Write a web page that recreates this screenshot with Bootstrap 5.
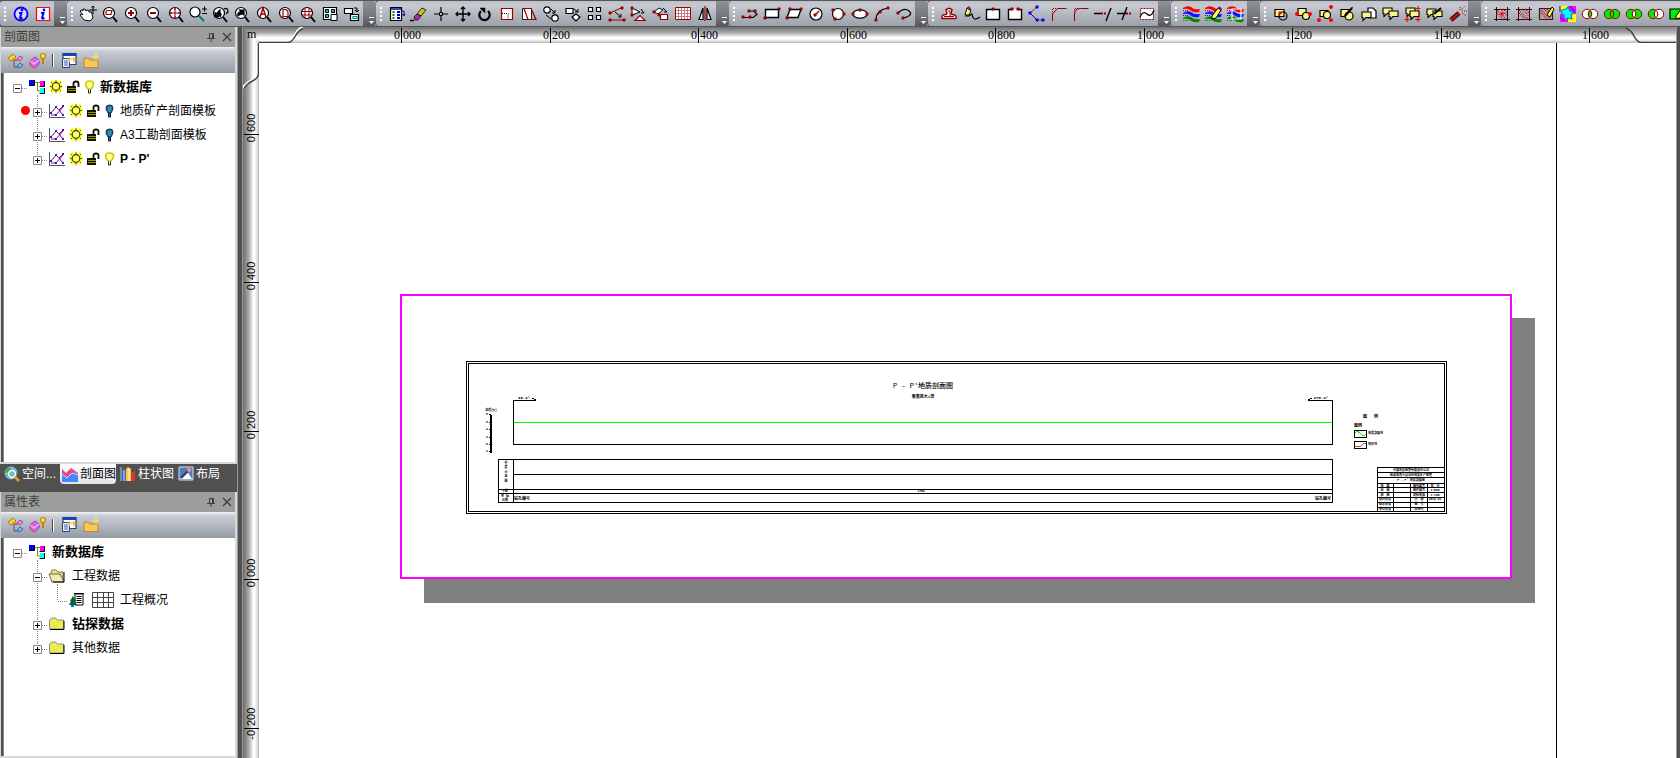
<!DOCTYPE html>
<html lang="zh-CN">
<head>
<meta charset="utf-8">
<meta name="viewport" content="width=device-width, initial-scale=1">
<title>剖面图</title>
<link href="https://cdn.jsdelivr.net/npm/bootstrap@5.3.0/dist/css/bootstrap.min.css" rel="stylesheet">
<style>
body{font:12px/16px "Liberation Sans","Noto Sans CJK SC",sans-serif;background:#505050;color:#000}
.strip{height:27px;background:#55565a;padding-bottom:1px;padding-top:1px}
.tgroup{background:linear-gradient(#bfc2c9,#c6c9d0 20%,#b4b8c0 50%,#9da1a9);border-radius:3px 0 0 3px}
.grip{width:10px;height:16px;margin-top:5px;background:radial-gradient(circle,#fff 0 1px,transparent 1px) 3px 0/4px 4px repeat-y}
.tool{width:22px;height:25px;padding:0;border:0;background:none;display:flex;align-items:center;justify-content:center}
.tool svg{width:20px;height:18px;overflow:visible}
.more{width:13px;padding:0;border:0;background:linear-gradient(#8d9096,#74777c 60%,#55575c);border-radius:0 3px 3px 0;display:flex;align-items:end;justify-content:end}
.side{width:238px;border-right:1px solid #9a9a9a}
.pane{border:solid #d6d8d9;border-width:0 2px 2px 1px}
.pane-one{flex:437 1 0}
.pane-two{flex:266 1 0}
.phead{height:20px;background:#9c9e9b;color:#3c3e3c;padding:0 0 0 3px}
.phead h2{font-size:12px;line-height:16px;font-weight:400}
.hbtn{width:16px;height:16px;padding:0;border:0;background:none;color:#3c3e3c;display:flex;align-items:center;justify-content:center}
.pbar{height:26px;background:linear-gradient(#e2e5ea,#c6cad2 15%,#adb2bb 60%,#949aa3);border-top:1px solid #eee;padding-left:4px}
.pbar .sep{width:1px;height:13px;background:#444;border-right:1px solid #fff;box-sizing:content-box;margin:0 4px 0 3px}
.tree{background:#fff;border-left:1px solid #888;margin-left:2px;padding-top:2px}
.tree ul{list-style:none;margin:0;padding:0;position:relative}
.tree ul ul{margin-left:20px}
.tree ul ul::before{content:"";position:absolute;left:13px;top:-4px;bottom:12px;border-left:1px dotted #888}
.node{height:24px;display:flex;align-items:center;padding-left:3px;white-space:nowrap;position:relative}
.exp{width:20px;height:16px;padding:0;border:0;background:none;display:flex;flex:none}
.exp svg{width:20px;height:16px}
.w16{width:16px}.w17{width:17px}.w18{width:18px}.w20{width:20px}.w24{width:24px}
.node svg{height:18px;flex:none;overflow:visible}
.node span{margin-left:2px}
.node span.wide{margin-left:5px}
.node b{font-size:13px}
.now{position:absolute;left:-3px;top:7px;width:9px;height:9px;border-radius:50%;background:#f00}
.tabs{height:28px;padding:0 4px 8px;gap:4px}
.ptab{height:20px;padding:0;border:0;background:none;color:#fff;font-size:12px;line-height:16px;display:flex;align-items:center;gap:2px;white-space:nowrap}
.ptab svg{width:16px;height:16px}
.ptab.active{background:linear-gradient(#fff,#dfe3e8);color:#000;border-radius:0 0 4px 4px;padding-left:2px}
.work{margin-left:5px;margin-right:4px;background:#fff;outline:1px solid #999}
.work svg{display:block}
.rule-x{height:16px;width:100%}
.rule-y{width:16px;flex:none;height:100%}
.serif{font:12px "Liberation Serif","Noto Sans CJK SC",serif}
.vert{font:11px "Liberation Sans",sans-serif}
.sheet{font-family:"Liberation Mono","Noto Sans CJK SC",monospace;font-size:4px;font-weight:700}
.sheet .tt{font-size:7px;font-weight:500}
.sheet .mini{font-size:3px}
</style>
<script src="https://cdn.jsdelivr.net/npm/bootstrap@5.3.0/dist/js/bootstrap.bundle.min.js"></script>
</head>
<body class="vh-100 overflow-hidden d-flex flex-column">

<svg width="0" height="0" class="position-absolute" aria-hidden="true">
<defs>
<linearGradient id="gv" x2="0" y2="1"><stop offset="0" stop-color="#6e6e6e"/><stop offset=".35" stop-color="#a8a8a8"/><stop offset=".65" stop-color="#fff"/><stop offset=".8" stop-color="#f4f4f4"/><stop offset="1" stop-color="#b8b8b8"/></linearGradient>
<linearGradient id="gh"><stop offset="0" stop-color="#6e6e6e"/><stop offset=".35" stop-color="#a8a8a8"/><stop offset=".65" stop-color="#fff"/><stop offset=".8" stop-color="#f4f4f4"/><stop offset="1" stop-color="#b8b8b8"/></linearGradient>
<pattern id="dots" width="2" height="2" patternUnits="userSpaceOnUse"><rect width="2" height="2" fill="#ff0"/><path d="M0 0h1v1h-1zM1 1h1v1h-1z" fill="#d8d8a0"/></pattern>
<symbol id="root" viewBox="0 0 20 18"><path d="M7 4.500h6M10.500 5v8h3" stroke="#880" fill="none"/><path d="M2 2h6v5H2z" fill="#00f"/><path d="M13 3h5v5h-5z" fill="#f0f"/><path d="M13 10h5v5h-5z" fill="#0ff"/><path d="M7.500 2v5.500H2M17.500 3v5.500h-5M17.500 10v5.500h-5" stroke="#000" fill="none"/></symbol>
<symbol id="sun" viewBox="0 0 18 18"><path d="M4 3h10v11H4z" fill="#ff0"/><path d="M4 3h2v2H4zM12 3h2v2h-2zM4 12h2v2H4zM12 12h2v2h-2zM3 7h1v3H3zM14 7h1v3h-1z" fill="#ff0" stroke="#ff0"/><circle cx="9" cy="8.500" r="3.800" fill="#ff6" stroke="#332" stroke-width="1.200"/><path d="M4 4l1 1M14 4l-1 1M4 13l1-1M14 13l-1-1M9 2v2M9 13v2M3 8.500h2M13 8.500h2" stroke="#663"/></symbol>
<symbol id="lock" viewBox="0 0 16 18"><path d="M2 8h9v7H2z" fill="#121200"/><path d="M3 10.500h8M3 12.500h8" stroke="#998f00"/><path d="M8.500 8V5.500q0-2 2.500-2t2.500 2V9" fill="none" stroke="#121200" stroke-width="1.800"/></symbol>
<symbol id="on" viewBox="0 0 17 18"><path d="M7 11Q4.500 8 4.500 6q0-3 4-3t4 3q0 2-2.500 5z" fill="#ff8" stroke="#cc0" stroke-width="1.500"/><path d="M8.500 5v5" stroke="#fff"/><path d="M7.500 11.500v3.500h2v-3.500" fill="#fff" stroke="#222"/></symbol>
<symbol id="off" viewBox="0 0 17 18"><path d="M7 11Q5 8 5 6q0-3 3.500-3T12 6q0 2-2 5z" fill="#237a96" stroke="#124"/><path d="M7 5l2 5M9.500 5v3" stroke="#4ac" stroke-width=".7"/><path d="M7.500 11v4h2v-4" fill="#237a96" stroke="#114"/></symbol>
<symbol id="sect" viewBox="0 0 20 18"><path d="M2.500 2v13.500H18" fill="none" stroke="#555"/><path d="M4 11l5-6 3 3 4-4M4 13h5l7-8M12 8l4 5" fill="none" stroke="#808"/><path d="M3 10h2v2H3zM8 4h2v2H8zM15 3h2v2h-2zM8 12h2v2H8zM15 12h2v2h-2z" fill="#22c"/></symbol>
<symbol id="fold" viewBox="0 0 20 18"><path d="M2.500 14V5l2-2h4l2 2h6v9z" fill="url(#dots)" stroke="#888"/><path d="M3 14.500h14V6" fill="none" stroke="#000"/></symbol>
<symbol id="open" viewBox="0 0 20 18"><path d="M4 8V5l1-2h4l2 2h5v10" fill="url(#dots)" stroke="#777"/><path d="M2 7h11l4 8H5z" fill="#eeeeaa" stroke="#666"/><path d="M17 5v10H6" fill="none" stroke="#000"/></symbol>
<symbol id="form" viewBox="0 0 20 18"><path d="M8 3h8v11H8z" fill="#fff" stroke="#000"/><path d="M7 2.500h10" stroke="#000"/><path d="M9.500 5.500h5M9.500 7.500h5M9.500 9.500h5M9.500 11.500h5" stroke="#000"/><path d="M6 5l3 5H8l2 4H2l2-4H3z" fill="#063"/><path d="M4 14h3v2H4z" fill="#06f"/></symbol>
<symbol id="grid" viewBox="0 0 24 18"><path d="M1.500 1.500h21v15h-21zM1.500 6.500h21M1.500 11.500h21M6.500 1.500v15M12.500 1.500v15M17.500 1.500v15" fill="#fff" stroke="#444"/></symbol>
<symbol id="minus" viewBox="0 0 20 16"><path d="M6.500 4.500h8v8h-8z" fill="#fff" stroke="#888"/><path d="M8 8.500h5" stroke="#000"/><path d="M15 8.500h5" stroke="#888" stroke-dasharray="1 1"/></symbol>
<symbol id="plus" viewBox="0 0 20 16"><path d="M6.500 4.500h8v8h-8z" fill="#fff" stroke="#888"/><path d="M8 8.500h5M10.500 6v5" stroke="#000"/><path d="M15 8.500h5" stroke="#888" stroke-dasharray="1 1"/></symbol>
<symbol id="leaf" viewBox="0 0 20 16"><path d="M11 8.500h9" stroke="#888" stroke-dasharray="1 1"/></symbol>
<symbol id="pin" viewBox="0 0 12 12"><path d="M4.500 2.500h3v5h-3zM2 7.500h8M6 8v3M8.500 2v5" fill="none" stroke="currentColor"/></symbol>
<symbol id="close" viewBox="0 0 12 12"><path d="M2 2l8 8M10 2l-8 8" stroke="currentColor" stroke-width="1.300"/></symbol>
</defs>
</svg>

<header class="strip d-flex overflow-hidden flex-nowrap" id="strip" role="toolbar" aria-label="工具栏"></header>

<div class="d-flex flex-grow-1 overflow-hidden">
<aside class="side d-flex flex-column flex-shrink-0">
  <section class="pane pane-one d-flex flex-column overflow-hidden">
    <div class="phead d-flex align-items-center flex-shrink-0"><h2 class="mb-0 me-auto">剖面图</h2>
      <button class="hbtn" aria-label="固定"><svg width="12" height="12"><use href="#pin"/></svg></button>
      <button class="hbtn" aria-label="关闭"><svg width="12" height="12"><use href="#close"/></svg></button></div>
    <div class="pbar d-flex align-items-center flex-shrink-0"></div>
    <nav class="tree flex-grow-1">
      <ul><li>
        <div class="node"><button class="exp" aria-label="收起"><svg><use href="#minus"/></svg></button><svg class="w20"><use href="#root"/></svg><svg class="w18"><use href="#sun"/></svg><svg class="w16"><use href="#lock"/></svg><svg class="w17"><use href="#on"/></svg><span><b>新数据库</b></span></div>
        <ul>
          <li class="node"><i class="now"></i><button class="exp" aria-label="展开"><svg><use href="#plus"/></svg></button><svg class="w20"><use href="#sect"/></svg><svg class="w18"><use href="#sun"/></svg><svg class="w16"><use href="#lock"/></svg><svg class="w17"><use href="#off"/></svg><span>地质矿产剖面模板</span></li>
          <li class="node"><button class="exp" aria-label="展开"><svg><use href="#plus"/></svg></button><svg class="w20"><use href="#sect"/></svg><svg class="w18"><use href="#sun"/></svg><svg class="w16"><use href="#lock"/></svg><svg class="w17"><use href="#off"/></svg><span>A3工勘剖面模板</span></li>
          <li class="node"><button class="exp" aria-label="展开"><svg><use href="#plus"/></svg></button><svg class="w20"><use href="#sect"/></svg><svg class="w18"><use href="#sun"/></svg><svg class="w16"><use href="#lock"/></svg><svg class="w17"><use href="#on"/></svg><span class="fw-bold">P - P'</span></li>
        </ul>
      </li></ul>
    </nav>
  </section>

  <div class="tabs d-flex flex-shrink-0" role="tablist">
    <button class="ptab" role="tab"><svg viewBox="0 0 16 16"><circle cx="7" cy="7" r="6.500" fill="#7bd"/><path d="M2 3q3-3 5 0L5 6 1 7zM9 9l4-3v4l-3 3zM3 9l3 1v3z" fill="#4a3"/><circle cx="8" cy="8" r="3.500" fill="#7bb" stroke="#fff" stroke-width="1.500"/><path d="M11 11l4 4" stroke="#e92" stroke-width="2.500"/></svg>空间...</button>
    <button class="ptab active" role="tab" aria-selected="true"><svg viewBox="0 0 16 16"><path d="M0 3l4 4 5-5 7 5v8H0z" fill="#e6468c"/><path d="M0 8l5 4 5-5 6 2v7H0z" fill="#48f"/><path d="M0 8l5 4 5-5 6 2" stroke="#bdf" fill="none"/></svg>剖面图</button>
    <button class="ptab" role="tab"><svg viewBox="0 0 16 16"><path d="M1 1v14" stroke="#9cf"/><path d="M2 5l2-2 2 2v10H2z" fill="#36c"/><path d="M6 3l2-2 3 2v12H6z" fill="#fc3"/><path d="M11 7l2-2 2 2v8h-4z" fill="#d33"/><path d="M4 4v11M9 2v13" stroke="#fff" stroke-width=".8"/></svg>柱状图</button>
    <button class="ptab" role="tab"><svg viewBox="0 0 16 16"><path d="M1 1h14v13H1z" fill="#4a7bc8" stroke="#dde"/><path d="M2 13l7-8 5 8z" fill="#fff"/><path d="M3 12l8-8" stroke="#333" stroke-width="2"/><circle cx="11" cy="4" r="2" fill="#f96"/></svg>布局</button>
  </div>

  <section class="pane pane-two d-flex flex-column overflow-hidden">
    <div class="phead d-flex align-items-center flex-shrink-0"><h2 class="mb-0 me-auto">属性表</h2>
      <button class="hbtn" aria-label="固定"><svg width="12" height="12"><use href="#pin"/></svg></button>
      <button class="hbtn" aria-label="关闭"><svg width="12" height="12"><use href="#close"/></svg></button></div>
    <div class="pbar d-flex align-items-center flex-shrink-0"></div>
    <nav class="tree flex-grow-1">
      <ul><li>
        <div class="node"><button class="exp" aria-label="收起"><svg><use href="#minus"/></svg></button><svg class="w20"><use href="#root"/></svg><span class="wide"><b>新数据库</b></span></div>
        <ul>
          <li><div class="node"><button class="exp" aria-label="收起"><svg><use href="#minus"/></svg></button><svg class="w20"><use href="#open"/></svg><span class="wide">工程数据</span></div>
            <ul><li class="node"><div class="exp"><svg><use href="#leaf"/></svg></div><svg class="w20"><use href="#form"/></svg><svg class="w24 ms-1"><use href="#grid"/></svg><span class="wide">工程概况</span></li></ul></li>
          <li class="node"><button class="exp" aria-label="展开"><svg><use href="#plus"/></svg></button><svg class="w20"><use href="#fold"/></svg><span class="wide"><b>钻探数据</b></span></li>
          <li class="node"><button class="exp" aria-label="展开"><svg><use href="#plus"/></svg></button><svg class="w20"><use href="#fold"/></svg><span class="wide">其他数据</span></li>
        </ul>
      </li></ul>
    </nav>
  </section>
</aside>

<main class="work flex-grow-1 d-flex flex-column overflow-hidden">
  <svg class="rule-x flex-shrink-0"><rect width="100%" height="16" fill="url(#gv)"/><path d="M0 0l16 16H0z" fill="url(#gh)"/><text class="serif" x="4" y="11">m</text>
    <path d="M16 15.500h28q5 0 8-6t8-8" fill="none" stroke="#fff" stroke-width="2" transform="translate(0 -2)"/><path d="M16 15.500h28q5 0 8-6t8-8" fill="none" stroke="#444" stroke-width="1.500"/>
    <svg x="100%" overflow="visible"><path d="M-50 1q5 2 8 8t7 6.500H0V0h-50z" fill="#fff" opacity=".15"/><path d="M-50 1q5 2 8 8t7 6.500H0" fill="none" stroke="#444" stroke-width="1.500"/></svg>
    <g class="serif" id="xt"></g></svg>
  <div class="d-flex flex-grow-1 overflow-hidden">
    <svg class="rule-y"><rect width="16" height="100%" fill="url(#gh)"/>
      <path d="M15.500 0v30q0 5-6 8t-8 7" fill="none" stroke="#fff" stroke-width="2" transform="translate(-2 0)"/><path d="M15.500 0v30q0 5-6 8t-8 7" fill="none" stroke="#444" stroke-width="1.500"/>
      <g class="vert" id="yt"></g></svg>
    <svg class="sheet flex-grow-1 h-100" role="img" aria-label="P - P' 地质剖面图">
      <g transform="translate(-259 -43)" fill="none" stroke="#000" shape-rendering="crispEdges">
        <path d="M1556.500 43V3000"/>
        <path d="M424 318h1111v285H424z" fill="#808080" stroke="none"/>
        <path d="M401 295h1110v283H401z" fill="#fff" stroke="#f0f" stroke-width="2"/>
        <path d="M466.500 361.500h980v152h-980zM468.500 363.500h976v148h-976z"/>
        <path d="M536 400.500h-22.500v44h819v-44h-24.500M498.500 459.500h834v43h-834zM513.500 459.500v43M513.500 474.500h819M498.500 489.500h834M498.500 493.500h834"/>
        <path d="M532 398l4 2M1308 400l4-2"/>
        <path d="M514 422.500h818" stroke="#0f0"/>
        <path d="M491 415v37.500" stroke-width="2"/>
        <path d="M489 414.500h2M489 422.500h2M489 429.500h2M489 437.500h2M489 444.500h2M489 451.500h2"/>
        <path d="M1354.500 430.500h12v7h-12zM1354.500 441.500h12v7h-12z"/>
        <path d="M1355 433q3-3 6 1t5 0" stroke="#0e0"/><path d="M1355 446q5 2 7-1t4-1" stroke="#a54"/>
        <path d="M1377.500 511.500v-44h67M1377.500 472.500h67M1377.500 477.500h67M1377.500 483.500h67M1377.500 487.500h67M1377.500 492.500h67M1377.500 497.500h67M1377.500 502.500h67M1377.500 507.500h67M1393.500 483.500v28M1410.500 483.500v28M1427.500 483.500v28"/>
        <g fill="#000" stroke="none" text-anchor="middle">
          <text class="tt" x="893" y="388" text-anchor="start">P - P'</text><text class="tt" x="918" y="388" text-anchor="start">地质剖面图</text>
          <text x="923" y="398">垂直放大1倍</text>
          <text x="524" y="399">98.2°</text><text x="1321" y="399">278.2°</text>
          <text class="mini" x="491" y="411">高程(m)</text>
          <g class="mini"><text x="487" y="415">8</text><text x="487" y="423">6</text><text x="487" y="430">4</text><text x="487" y="438">2</text><text x="487" y="445">0</text><text x="487" y="452">2</text>
          <text x="506" y="463">岩</text><text x="506" y="468">层</text><text x="506" y="473">示</text><text x="506" y="477">意</text><text x="506" y="482">图</text><text x="505" y="492">平距</text><text x="921" y="492">1764</text><text x="505" y="497">坐 标</text><text x="505" y="501">位置</text></g>
          <text x="514" y="500" text-anchor="start">钻孔编号</text><text x="1331" y="500" text-anchor="end">钻孔编号</text>
          <text x="1365" y="418">图</text><text x="1376" y="418">例</text><text x="1358" y="427">图例</text>
          <g class="mini" text-anchor="start"><text x="1368" y="434">地质剖面线</text><text x="1368" y="445">地形线</text></g>
          <g class="mini"><text x="1411" y="471">中国地质勘查有限责任公司</text><text x="1411" y="476">新疆维吾尔自治区地质矿产勘查</text><text x="1411" y="481">P - P' 地质剖面图</text>
          <text x="1385" y="487">拟　编</text><text x="1385" y="491">审　核</text><text x="1385" y="496">制　图</text><text x="1385" y="500">项目负责</text><text x="1385" y="505">技术负责</text><text x="1385" y="510">单位负责</text><text x="1419" y="487">顺序编号</text><text x="1419" y="491">图件编号</text><text x="1419" y="496">资料来源</text><text x="1419" y="500">日　期</text><text x="1419" y="505">图　号</text><text x="1419" y="510">比例尺</text><text x="1435" y="487">第　页</text><text x="1435" y="491">1:500</text><text x="1435" y="496">1:100</text><text x="1435" y="500">2012.01</text></g>
        </g>
      </g>
    </svg>
  </div>
</main>
</div>

<script>
// Icon artwork, each drawn on a 20 x 18 field
const R = '#900';
const p = (d, s = '#000', f = 'none', w = 1.2) => `<path d="${d}" stroke="${s}" fill="${f}" stroke-width="${w}"/>`;
const dash = (d, s, w = 1) => `<path d="${d}" stroke="${s}" fill="none" stroke-width="${w}" stroke-dasharray="1 1"/>`;
const c = (x, y, r, f = '#fff', s = '#000', w = 1.2) => `<circle cx="${x}" cy="${y}" r="${r}" fill="${f}" stroke="${s}" stroke-width="${w}"/>`;
const dots = (col, ...a) => a.map(([x, y]) => `<path d="M${x - 1} ${y - 1.5}h2l.5 .5v2l-.5 .5h-2l-.5-.5v-2z" fill="${col}"/>`).join('');
const big = (col, ...a) => a.map(([x, y]) => c(x, y, 2, col, 'none', 0)).join('');
const mag = inner => p('M13 12l4 5', '#000', 'none', 2) + c(9, 8, 5.500) + inner;
const wave = (y, col) => `<path d="M1 ${y}q4-3 8-1 3 3 9 2l-1 3q-6 1-9-2-3-2-7-1z" fill="${col}"/>` + dash(`M1 ${y + 2.5}h6`, col);
const swoosh = wave(3, '#f00') + wave(8, '#11f') + wave(13, '#080');
const pencil = p('M8 11L14 3l3 2-5 8-4 1z', '#000', '#ff5', 1) + p('M14 3l1-1 2 1v2z', '#808', '#808', 1);
const yel = '#fbf58a';
const bub = (x, y) => p(`M${x} ${y}h9v5.500h-5l-3 3v-3h-1z`, '#000', yel, 1.1);
const rings = (a, b, m) => c(7, 9, 4.700, a, R, 1) + c(13, 9, 4.700, b, R, 1) + p('M10 5.300a4.700 4.700 0 0 1 0 7.400a4.700 4.700 0 0 1 0-7.400z', R, m, 1);
const hatch = dash('M5 8l6 6M5 5l9 9M8 4l7 7M11 4l4 4', R, 1.2);
const fence = p('M4.500 2v14M15.500 2v14M2 4.500h16M2 14.500h16', '#400', 'none', 1);
const info = p('M8 8h2.500l-1.500 5q0 1 2.500 0', '#00f', 'none', 2) + c(11, 5, 1.400, '#00f', 'none');
const sets = [
 [['信息', c(10, 9, 6.500, '#dde', '#00f', 1.800) + info], ['要素信息', p('M3.500 2.500h13v13h-13z', 'red', '#fff') + info]],
 [['漫游', p('M6 15l-4-5q1-2 3 0L2 6q1-2 3 0L5 4q2-1 3 2l1-1q2 0 2 2 3-1 3 2l1 4-3 3z', '#000', '#fff', 1) + p('M15 1v8M11 5h8M13.500 2.500l1.500-1.500 1.500 1.500', '#000', 'none', 1)],
  ['窗口放大', mag(p('M6 7l1-1.500h5l-1 4H6z', R))], ['放大', mag(p('M6 8h6M9 5v6', R, 'none', 2))], ['缩小', mag(p('M6 8h6', R, 'none', 2))],
  ['全图', mag(p('M3 8h12M9 2v12M5 7v2M13 7v2M8 4h2M8 12h2', R, 'none', 1))],
  ['缩放', p('M11 11l5 5', '#077', 'none', 2) + c(7, 7, 5) + p('M14 4h5M16.500 1.500v5M14 8.500h5', '#000', 'none', 1)],
  ['上一视图', mag(p('M6 9l4-4v3q2 0 0 4M5 7v5h4', '#000', '#000') + p('M14 4q4-2 4 3l-2 2', '#000'))],
  ['下一视图', mag(p('M12 9L8 5v2q-3 1-2 4M8 5h4v5z', '#000', '#000'))],
  ['缩放到注记', mag(p('M6 12l3-9 3 9M7 9h4', R, 'none', 1.500))], ['缩放到页', mag(p('M7 4.500h3l2 2v5H7z', R))], ['缩放到格', mag(p('M4 6.500h10M4 10h10M7 3v10M11 3v10', R, 'none', 1))],
  ['多视图', p('M3.500 2.500h13v12h-13z', '#000', '#fff') + p('M5.500 4.500h3v3h-3zM11.500 4.500h3v3h-3zM5.500 9.500h3v3h-3z', '#000', '#0cc', 1) + p('M11 9.500h6v6h-6z', '#000', '#fff', 1)],
  ['鸟瞰', p('M2.500 3.500h8v5h-8zM8.500 9.500h8v6h-8z', '#000', '#fff') + p('M11 11.500h4v2h-4z', '#099') + p('M12 3h3v4M13 5l2 2 2-2', '#000', 'none', 1)]],
 [['属性', p('M3.500 2.500h11v13h-11z', '#000', '#fff') + p('M4 4h10', '#00a', 'none', 1.500) + p('M6.500 6v9', '#080', 'none', 2).replace('/>', ' stroke-dasharray="2 1"/>') + p('M11.500 6v9', '#00a', 'none', 3).replace('/>', ' stroke-dasharray="2 1"/>') + p('M15 6h2v4M15 9l2 2 1-2', '#00c', 'none', 1)],
  ['删除', p('M8 9l5-6 4 2-5 6z', '#222', '#cc0', 1) + p('M5 12l3-3 4 2-3 4H6z', '#222', '#b2b', 1) + p('M1 15.500h4', '#000', 'none', 1.500)],
  ['节点', p('M10 2v14M3 9h14', '#000', 'none', 1.200) + p('M8.500 7.500h3v3h-3z', '#000', '#bbb', 1)],
  ['移动', p('M10 2v14M3 9h14M8 4l2-2 2 2M8 14l2 2 2-2M5 7L3 9l2 2M15 7l2 2-2 2', '#000', 'none', 1.400)],
  ['旋转', p('M6 6a5.200 5.200 0 1 0 7 0', '#000', 'none', 2.200) + p('M5 3h5v5z', '#000', '#000', .5)],
  ['比例', p('M4.500 3.500h11v11h-11z', R, '#fff') + dash('M5 8.500h6v6', '#000')],
  ['倾斜', p('M3.500 3.500h9v11h-9z', '#222', '#fff', 1) + p('M5 3.500h7l5 11H9z', R)],
  ['复制', c(6, 5, 3.200) + c(14, 13, 3.200) + p('M10 4l4 4M14 5v3h-3M5 10l5 4', '#000', 'none', 1)],
  ['旋转复制', p('M3 3.500h7v5H3zM9 12l4-3 4 3-4 4z', '#000', '#fff') + p('M11 4l4 3M15 4v3h-3', '#000', 'none', 1)],
  ['阵列', p('M3.500 2.500h4v4h-4zM11.500 2.500h4v4h-4zM3.500 10.500h4v4h-4zM11.500 10.500h4v4h-4z', '#000', '#fff')],
  ['对齐', p('M3 8l11-5M3 15h13', R, 'none', 1) + p('M8 7l6 5M11 12h3V9', '#000', 'none', 1) + dots(R, [3, 8], [15, 3], [3, 15], [17, 15])],
  ['变换', p('M3 10V3l8 4z', '#000', '#fff', 1) + p('M6 15.500l5-5 5 5z', R, '#fff') + p('M12 4l3 4h-3', '#000', 'none', 1) + dots(R, [3, 3], [3, 10])],
  ['变形', p('M3 7l5-4 4 2-5 4z', '#000', '#fff', 1) + p('M9.500 9.500h7v5h-7z', R, '#fff') + p('M12 3l4 4h-3', '#000', 'none', 1) + dots(R, [3, 7], [8, 10])],
  ['网格', p('M2.500 2.500h15v12h-15z', R, '#fff', 1) + p('M3 5.500h14M3 8.500h14M3 11.500h14M5.500 3v11M8.500 3v11M11.500 3v11M14.500 3v11', '#b66', 'none', .8)],
  ['镜像', p('M8 3v11.500H4zM12 3v11.500h4z', '#000', '#fff') + p('M10 1v15', R)]],
 [['折线', p('M2 12.500h11l4-3-3-3.500H9', '#000') + dots(R, [3, 12], [10, 12], [9, 6], [15, 6])],
  ['矩形', p('M3.500 4.500h13v8h-13z', '#000', '#fff', 1.400) + dots(R, [3, 13], [17, 4])],
  ['平行四边形', p('M6 4.500h11l-3 8H3z', '#000', '#fff', 1.400) + dots(R, [3, 13], [6, 4], [17, 4])],
  ['圆', c(10, 9, 6) + p('M9 10l4-4', R) + dots(R, [9, 10])],
  ['三点圆', c(10, 9, 5.500) + dots(R, [5, 5], [16, 9], [7, 14])],
  ['椭圆', '<ellipse cx="10" cy="9" rx="7" ry="4.200" fill="#fff" stroke="#000" stroke-width="1.200"/>' + dots(R, [3, 9], [10, 5], [17, 9])],
  ['圆弧', p('M4 15q0-10 12-12') + dots(R, [4, 15], [8, 7], [16, 3])],
  ['曲线', p('M4 8q6-6 11-2t-5 7') + dots(R, [4, 8], [9, 13])]],
 [['图章', p('M3 13.500q-1-4 4-4l1-1-1-4 2-1h2l2 1-1 4 1 1q5 0 4 4z', R, '#fff', 1.4) + p('M5 11.500h10M9 6h2v5', R, 'none', 1)],
  ['手绘', p('M4 10L6 3l4 3-2 4z', '#000', '#ff5', 1) + p('M4 11h4l3-2q1 6 4 5t4-2', '#000') + p('M6 3l2-1 2 3', '#808', '#808')],
  ['闭合', p('M3.500 4.500h13v10h-13z', '#000', '#fff', 1.400) + dots(R, [10, 4])],
  ['断开', p('M7 4.500H3.500v10h13v-10H13', '#000', '#fff', 1.400) + dots(R, [7, 4], [13, 4])],
  ['贝塞尔', p('M3 8l6 6', '#00a', 'none', 1) + p('M10 2L3 8M10 15h6', 'red', 'none', 1) + dots('#00f', [10, 2], [3, 8], [10, 15], [16, 15])],
  ['倒角', p('M3.500 16V9l5-5.500h9', R, 'none', 1) + dash('M3.500 9V3.500h5', R)],
  ['圆角', p('M3.500 16v-6q0-6.500 6-6.500h8', R, 'none', 1) + dash('M3.500 9V3.500h5', R)],
  ['延伸', p('M1 8.500h7M13 16l5-13', '#000', 'none', 1.400) + `<path d="M8 8.500h6" stroke="${R}" stroke-width="2" stroke-dasharray="2 1"/>`],
  ['修剪', p('M2 8.500h9M7 15l5-13', '#000', 'none', 1.400) + `<path d="M11 8.500h6" stroke="${R}" stroke-width="2" stroke-dasharray="2 1"/>`],
  ['光滑', `<path d="M3.500 3.500h13v11h-13z" fill="#fff" stroke="${R}" stroke-dasharray="2 1"/>` + p('M3 12q3-7 7-3t7-4', '#000')]],
 [['地层', swoosh], ['编辑地层', swoosh + pencil], ['选择地层', swoosh + p('M6 4h9v10H6z', '#fff')]],
 [['选择', p('M4 4.500h9v7H4z', '#000', yel) + c(12, 11, 4, 'none') + dots('red', [9, 8])],
  ['移动对象', p('M5 3.500h8v7H5z', '#000', yel) + c(13, 11, 3.500, yel) + big('red', [4, 9], [17, 9])],
  ['节点编辑', p('M5 5.500h8v6H5z', '#000', yel) + c(12, 10, 3.500, yel) + big('red', [16, 2], [4, 15], [16, 15])],
  ['修改', p('M4 4.500h8v7H4z', '#000', yel) + c(12, 11, 4, yel) + p('M8 11l7-8', '#000', 'none', 2) + p('M14 3l2-1', '#808')],
  ['注记复制', p('M9 3h5l3 3v7H9z', '#000', '#fff') + bub(3, 7)],
  ['注记', bub(2, 3) + bub(8, 6)], ['注记移动', bub(3, 3) + bub(7, 6) + p('M15 1v5M12.500 3.500h5M4 12v5M1.500 14.500h5M15 12v5M12.500 14.500h5', 'red', 'none', 1.200)],
  ['注记编辑', bub(2, 4) + bub(8, 6) + p('M9 9l7-6', '#000', 'none', 2)],
  ['魔棒', p('M4 15L12 8', '#300', 'none', 4.500) + p('M4 15L12 8', '#b11', 'none', 2.500) + dash('M13 5V1M15 6h5M14 5l4-4M15 8l4 3', R)]],
 [['裁剪', fence + hatch + dots('red', [10, 9])], ['填充裁剪', fence + hatch], ['编辑区', p('M3.500 3.500h13v11h-13z', '#222', '#c9a0a0') + hatch + p('M11 10l5-8 2 2-4 8z', '#000', '#ff5', 1)],
  ['拓扑', '<path d="M2 1h8v8H2z" fill="#ff0"/><path d="M10 1h8v8h-8z" fill="#f0f"/><path d="M2 9h8v8H2z" fill="#f0f"/><path d="M10 9h8v8h-8z" fill="#ff0"/>' + p('M4 5l4-1 2-2 2 4 4 2-3 2 1 4-4-1-4 1V10L3 8z', '#08c', '#0ff') + p('M2 1v6M12 1l5 6M2 12l4 4', '#00f', 'none', 1)],
  ['交集', rings('#fff', '#fff', '#0d0')], ['并集', rings('#0e0', '#0e0', '#0e0')], ['异或', rings('#0e0', '#0e0', '#fff')], ['差集', rings('#0e0', '#fff', '#fff')],
  ['区编辑', p('M2 4h16v10H2z', '#000', '#0e0') + pencil]]
];
const tool = ([name, art]) => `<button class="tool flex-shrink-0" aria-label="${name}"><svg viewBox="0 0 20 18">${art}</svg></button>`;
document.getElementById('strip').innerHTML = sets.map(s =>
 `<div class="tgroup d-flex flex-shrink-0"><span class="grip"></span>${s.map(tool).join('')}<button class="more" aria-label="更多"><svg width="9" height="9"><path d="M2 .5h5" stroke="#fff"/><path d="M2 4h5l-2.500 3z" fill="#fff"/></svg></button></div>`).join('');

const side = [
 ['树', p('M2 6l5-4 3 3-5 4z', '#b70', '#fc4', 1) + p('M8 8v7h4M8 8h4', '#555', 'none', 1) + p('M11 7l3-3 3 2-3 3z', '#a4a', '#e8e', 1) + p('M11 14l3-3 3 2-3 3z', '#36a', '#7be', 1)],
 ['查询', p('M2 9l5-4 4 3v4l-5 4-4-3z', '#a3a', '#d6d', 1) + p('M2 9l4 3 5-4', '#ebe') + c(15, 4, 2.500, '#fd5', '#b80') + p('M15 7v5', '#b80', 'none', 2)],
 ['新建表', p('M4 1.500h13v11H4z', '#247', '#fff') + p('M3.500 3h14', '#14c', 'none', 2) + p('M3.500 6.500h7v9h-7z', '#247', '#eef', 1) + p('M5 9h4M5 11h4M5 13h4', '#36c', 'none', 1) + p('M8 7h5M10.500 5v5M13 7h4M15 5v5', '#db2')],
 ['新建文件夹', p('M3 15.500V6h4l2 2h8v7.500z', '#b82', '#f4c95c', 1) + p('M15 1v7M11 4.500h7M13 2l4 5M17 2l-4 5', '#fd5', 'none', 1)]
];
document.querySelectorAll('.pbar').forEach(b => b.innerHTML = tool(side[0]) + tool(side[1]) + '<span class="sep"></span>' + tool(side[2]) + tool(side[3]));

// Ruler divisions every 200 units
let xs = '', ys = '';
for (let i = 0; i < 9; i++) {
  const x = Math.round(158 + i * 148.5), v = String(i * 200).padStart(4, '0');
  xs += `<path d="M${x + .5} 1v15" stroke="#000"/><text x="${x - 1}" y="12" text-anchor="end">${v[0]}</text><text x="${x + 2}" y="12">${v.slice(1)}</text>`;
}
for (let i = 3; i >= -1; i--) {
  const y = Math.round(536 - i * 148.5), v = String(Math.abs(i) * 200).padStart(3, '0');
  ys += `<path d="M1 ${y + .5}h15" stroke="#000"/><text transform="translate(12 ${y - 2}) rotate(-90)">${v}</text><text transform="translate(12 ${y + 2}) rotate(-90)" text-anchor="end">${i < 0 ? '-' : ''}0</text>`;
}
document.getElementById('xt').innerHTML = xs;
document.getElementById('yt').innerHTML = ys;
</script>
</body>
</html>
